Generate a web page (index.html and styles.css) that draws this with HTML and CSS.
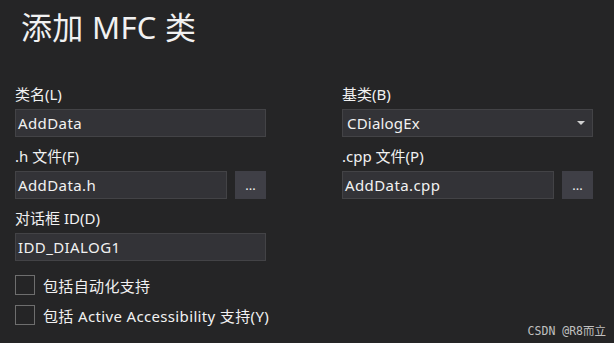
FILE: index.html
```html
<!DOCTYPE html>
<html lang="zh-CN">
<head>
<meta charset="utf-8">
<title>添加 MFC 类</title>
<link rel="stylesheet" href="styles.css">
</head>
<body>
<div class="dialog">
  <h1 class="title">添加 MFC 类</h1>
  <div class="form">
    <div class="col">
      <div class="field">
        <div class="label">类名(L)</div>
        <div class="input">AddData</div>
      </div>
      <div class="field">
        <div class="label">.h 文件(F)</div>
        <div class="row">
          <div class="input grow">AddData.h</div>
          <div class="btn">...</div>
        </div>
      </div>
      <div class="field">
        <div class="label">对话框 ID(D)</div>
        <div class="input">IDD_DIALOG1</div>
      </div>
      <div class="checks">
        <div class="check"><span class="box"></span><span>包括自动化支持</span></div>
        <div class="check"><span class="box"></span><span>包括 Active Accessibility 支持(Y)</span></div>
      </div>
    </div>
    <div class="col">
      <div class="field">
        <div class="label">基类(B)</div>
        <div class="input combo"><span>CDialogEx</span><span class="arrow"></span></div>
      </div>
      <div class="field">
        <div class="label">.cpp 文件(P)</div>
        <div class="row">
          <div class="input grow">AddData.cpp</div>
          <div class="btn">...</div>
        </div>
      </div>
    </div>
  </div>
  <div class="watermark">CSDN @R8而立</div>
</div>
</body>
</html>
```
FILE: styles.css
```css
html, body {
  margin: 0;
  padding: 0;
  background: #252526;
}
body {
  width: 614px;
  height: 343px;
  overflow: hidden;
  color: #f1f1f1;
  font-family: "Noto Sans", "Noto Sans CJK SC", sans-serif;
  font-size: 15px;
}
.dialog {
  position: relative;
  width: 614px;
  height: 343px;
}
.title {
  margin: 0;
  padding: 7px 0 0 21px;
  height: 72px;
  box-sizing: border-box;
  font-size: 31px;
  letter-spacing: 0.3px;
  font-weight: normal;
  line-height: 40px;
  font-family: "Noto Sans", "Noto Sans CJK SC", sans-serif;
}
.form {
  display: grid;
  grid-template-columns: 251px 251px;
  column-gap: 76px;
  padding: 12px 0 0 15px;
}
.field {
  margin-bottom: 9px;
}
.label {
  height: 20px;
  line-height: 20px;
  margin-bottom: 5px;
  font-size: 15px;
  white-space: nowrap;
}
.row {
  display: flex;
  gap: 8px;
}
.grow {
  flex: 1;
}
.input {
  height: 28px;
  box-sizing: border-box;
  background: #333337;
  border: 1px solid #434346;
  padding: 0 2px;
  line-height: 26px;
  font-size: 15px;
  letter-spacing: 0.4px;
  white-space: nowrap;
}
.combo {
  display: flex;
  justify-content: space-between;
  align-items: center;
  padding: 0 7px 0 4px;
  letter-spacing: 0.2px;
}
.arrow {
  width: 0;
  height: 0;
  border-left: 4px solid transparent;
  border-right: 4px solid transparent;
  border-top: 4px solid #d0d0d0;
}
.btn {
  width: 31px;
  height: 28px;
  box-sizing: border-box;
  background: #3f3f46;
  text-align: center;
  line-height: 28px;
  font-size: 13px;
}
.checks {
  display: flex;
  flex-direction: column;
  gap: 10px;
  padding-top: 5px;
}
.check {
  display: flex;
  align-items: center;
  gap: 8px;
  height: 20px;
  white-space: nowrap;
  letter-spacing: 0.35px;
}
.box {
  width: 20px;
  height: 20px;
  box-sizing: border-box;
  border: 1px solid #6e6e6e;
  flex: none;
}
.watermark {
  position: absolute;
  right: 8px;
  bottom: 6px;
  font-size: 11.5px;
  line-height: 12px;
  color: #c0c0c0;
  font-family: "DejaVu Sans Mono", "Noto Sans CJK SC", monospace;
}
```
